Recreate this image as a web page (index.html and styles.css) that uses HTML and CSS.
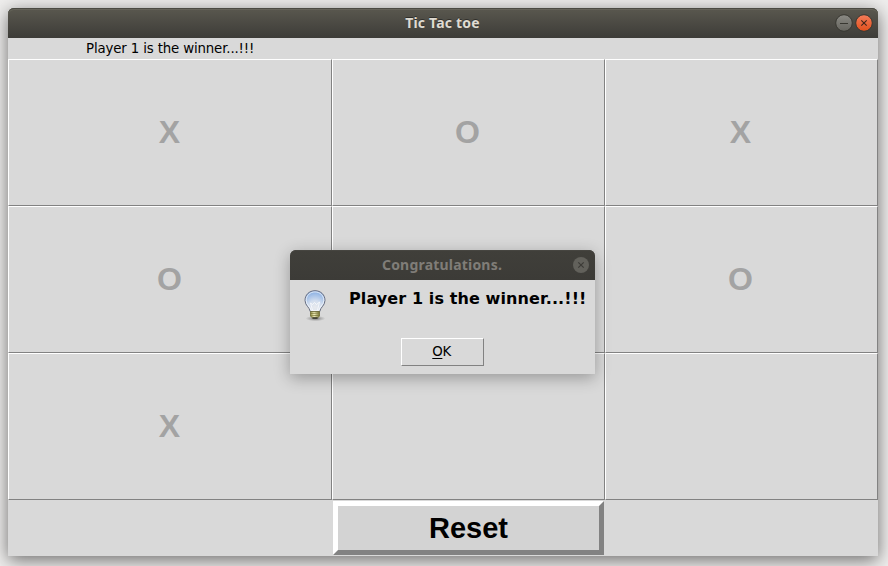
FILE: index.html
```html
<!DOCTYPE html>
<html lang="en">
<head>
<meta charset="utf-8">
<title>Tic Tac toe</title>
<link rel="stylesheet" href="styles.css">
</head>
<body>
<main class="window">
  <header class="titlebar">
    <h1 class="title">Tic Tac toe</h1>
    <div class="controls">
      <svg class="control" viewBox="0 0 18 18" aria-label="Minimize">
        <defs>
          <linearGradient id="gray" x2="0" y2="1"><stop offset="0" stop-color="#8b8a84"/><stop offset="1" stop-color="#65645e"/></linearGradient>
          <linearGradient id="orange" x2="0" y2="1"><stop offset="0" stop-color="#f37c5a"/><stop offset="1" stop-color="#e2501c"/></linearGradient>
        </defs>
        <circle cx="9" cy="9" r="8.3" fill="url(#gray)" stroke="#383731"/>
        <path d="M5 9.5h8" stroke="#383731"/>
      </svg>
      <svg class="control" viewBox="0 0 18 18" aria-label="Close">
        <circle cx="9" cy="9" r="8.3" fill="url(#orange)" stroke="#383731"/>
        <path d="M6.3 6.3l5.4 5.4M11.7 6.3l-5.4 5.4" stroke="#40251a" stroke-width="1.1"/>
      </svg>
    </div>
  </header>
  <p class="status">Player 1 is the winner...!!!</p>
  <section class="board">
    <div class="cell">X</div><div class="cell">O</div><div class="cell">X</div>
    <div class="cell">O</div><div class="cell"></div><div class="cell">O</div>
    <div class="cell">X</div><div class="cell"></div><div class="cell"></div>
  </section>
  <footer class="footer"><button class="reset">Reset</button></footer>
</main>
<section class="dialog">
  <header class="titlebar titlebar-inactive">
    <h2 class="title">Congratulations.</h2>
    <div class="controls">
      <svg class="control" viewBox="0 0 18 18" aria-label="Close">
        <circle cx="9" cy="9" r="8" fill="#62615b"/>
        <path d="M6.3 6.3l5.4 5.4M11.7 6.3l-5.4 5.4" stroke="#3c3b37" stroke-width="1.2"/>
      </svg>
    </div>
  </header>
  <div class="message-row">
    <svg class="bulb" viewBox="0 0 22 32">
      <defs>
        <radialGradient id="glass" cx=".5" cy=".8" r=".8"><stop offset="0" stop-color="#e9ebee"/><stop offset=".4" stop-color="#d3deee"/><stop offset="1" stop-color="#82abe2"/></radialGradient>
        <radialGradient id="shade"><stop offset="0" stop-color="#555" stop-opacity=".8"/><stop offset="1" stop-color="#777" stop-opacity="0"/></radialGradient>
        <linearGradient id="brass"><stop offset="0" stop-color="#8a873c"/><stop offset=".4" stop-color="#f4f1c0"/><stop offset="1" stop-color="#7a7738"/></linearGradient>
      </defs>
      <ellipse cx="11.5" cy="28.5" rx="10" ry="2.8" fill="url(#shade)"/>
      <path d="M11 .7C5.2.7 1 4.9 1 10.4c0 5.3 4.6 6.6 5.2 11.1h9.6c.6-4.5 5.2-5.8 5.2-11.1C21 4.9 16.8.7 11 .7z" fill="url(#glass)" stroke="#6a6f80"/>
      <path d="M11 1.9C6 1.9 2.2 5.6 2.2 10.4c0 4.4 4.2 6.2 5 10h7.6c.8-3.8 5-5.6 5-10C19.8 5.6 16 1.9 11 1.9z" fill="none" stroke="#fff" stroke-opacity=".7"/>
      <path d="M8.5 20L6.500 13l2 1.500 2-2 2 2 3-2.500-2 8" fill="none" stroke="#fff" stroke-opacity=".7"/>
      <path d="M6.500 21.500h9v4.500l-2 2h-5l-2-2z" fill="url(#brass)" stroke="#68652d" stroke-width=".7"/>
      <path d="M6.500 23.500l9-.5M6.500 25.800l9-.5" stroke="#716e31" stroke-width=".7"/>
      <path d="M8.500 28h5" stroke="#35342c" stroke-width="1.500"/>
    </svg>
    <p class="message">Player 1 is the winner...!!!</p>
  </div>
  <button class="ok"><span class="mnemonic">O</span>K</button>
</section>
</body>
</html>
```
FILE: styles.css
```css
* { box-sizing: border-box; }
html { height: 100%; background: #efeeed; }
body {
  margin: 0;
  padding: 8px 10px 10px 8px;
  height: 566px;
  overflow: hidden;
  font-family: "DejaVu Sans", sans-serif;
  color: #000;
}
h1, h2, p { margin: 0; }
button { padding: 0; color: #000; }
.window {
  display: flex;
  flex-direction: column;
  width: 870px;
  height: 548px;
  border-radius: 6px 6px 0 0;
  background: #d9d9d9;
  box-shadow: 0 4px 18px rgba(0, 0, 0, .55);
}
.titlebar {
  position: relative;
  display: flex;
  align-items: center;
  justify-content: center;
  height: 30px;
  flex: none;
  padding-right: 1px;
  border-radius: 6px 6px 0 0;
  background: linear-gradient(#5a584f, #3d3c38);
  box-shadow: inset 0 1px #4b4a43, inset 0 2px #66645a;
  color: #dfdbd2;
  text-shadow: 0 -1px #302f2b;
}
.title {
  font: bold 14px/30px "Noto Sans", sans-serif;
  letter-spacing: .2px;
  white-space: nowrap;
}
.controls {
  position: absolute;
  top: 6px;
  right: 5px;
  display: flex;
  gap: 2px;
}
.control { display: block; width: 18px; height: 18px; }
.status {
  height: 21px;
  padding-left: 78px;
  font-size: 13.333px;
  line-height: 22px;
  letter-spacing: -.14px;
}
.board {
  display: grid;
  grid-template-columns: 324px 273px 273px;
  grid-template-rows: repeat(3, 147px);
}
.cell {
  display: flex;
  align-items: center;
  justify-content: center;
  padding: 0 2px 2px 0;
  border: 1px solid;
  border-color: #fff #828282 #828282 #fff;
  font: bold 32px/36px "Liberation Sans", Arial, sans-serif;
  color: #a3a3a3;
}
.cell:nth-child(3n + 1) { padding-right: 1px; }
.footer { padding: 1px 0 0 325px; }
.reset {
  display: block;
  width: 271px;
  height: 54px;
  border: 5px solid;
  border-color: #fff #828282 #828282 #fff;
  background: #d3d3d3;
  font: bold 29px/34px "Liberation Sans", Arial, sans-serif;
}
.dialog {
  position: absolute;
  left: 290px;
  top: 250px;
  width: 305px;
  height: 124px;
  border-radius: 6px 6px 0 0;
  background: #d9d9d9;
  box-shadow: 0 4px 16px rgba(0, 0, 0, .3);
}
.titlebar-inactive {
  background: linear-gradient(#403f3a, #3c3b37);
  box-shadow: inset 0 1px #464540;
  color: #807d78;
  text-shadow: none;
}
.message-row {
  display: flex;
  height: 58px;
  padding: 10px 0 0 14px;
}
.bulb { width: 22px; height: 32px; flex: none; }
.message {
  margin-left: 23px;
  font-size: 16px;
  font-weight: bold;
  line-height: 18px;
  letter-spacing: .1px;
  white-space: nowrap;
}
.ok {
  display: block;
  width: 83px;
  height: 28px;
  margin-left: 111px;
  padding-right: 2px;
  border: 1px solid;
  border-color: #fff #828282 #828282 #fff;
  background: #d9d9d9;
  font: 13.333px/24px "DejaVu Sans", sans-serif;
  letter-spacing: -.4px;
}
.mnemonic {
  text-decoration: underline;
  text-decoration-thickness: 1px;
  text-underline-offset: 2px;
}
```
